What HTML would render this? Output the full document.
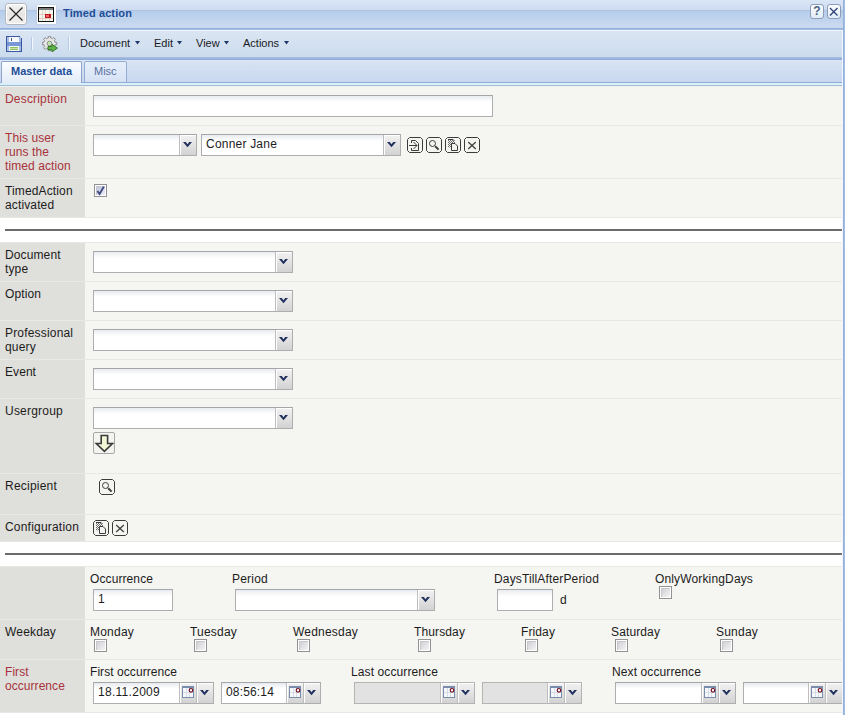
<!DOCTYPE html>
<html><head><meta charset="utf-8">
<style>
*{box-sizing:border-box;margin:0;padding:0}
html,body{width:845px;height:715px;overflow:hidden;background:#fff;font-family:"Liberation Sans",sans-serif;position:relative}
.a{position:absolute}
.t12{font-size:12px;line-height:14px;color:#1c1c1c;white-space:nowrap}
.red{color:#a8323c}
.lb{left:0;width:85px;background:#dfdfdb}
.ct{left:85px;width:758px;background:#f5f5f1}
.sep{left:0;width:843px;height:1px;background:#e8e8e4}
.rule{left:5px;width:838px;height:2px;background:#6c6c6c}
.inp{border:1px solid #acaeb0;border-top-color:#a4a6aa;background:linear-gradient(#e8ebef,#fff 6px,#fff);height:22px}
.btn{position:absolute;top:0;bottom:0;width:17px;border-left:1px solid #bdbdbd;background:linear-gradient(#f2f2f2,#d2d2d2);box-shadow:inset 1px 1px 0 #fff}
.cb{width:13px;height:13px;border:1px solid #929292;background:#fff;padding:1px}
.cb i{display:block;width:9px;height:9px;background:linear-gradient(135deg,#cdcdd2,#f4f4f6);box-shadow:inset 1px 1px 0 #c8c8cc}
.tb{font-size:11px;line-height:13px;color:#1a1a22;white-space:nowrap}
</style><style>
.itx{position:absolute;left:4px;top:2px;font-size:12px;line-height:14px;color:#1c1c1c;white-space:nowrap}
.chev{position:absolute;left:0;top:0}
.btn .cal{position:absolute;left:2px;top:3px}
.ck{background:linear-gradient(135deg,#b8c0dc,#eef0fa)!important}
.cb{position:absolute}
</style></head><body>

<!-- HEADER -->
<div class="a" style="left:0;top:0;width:845px;height:10px;background:linear-gradient(#d9e6f6,#cfdcf0)"></div>
<div class="a" style="left:0;top:10px;width:845px;height:1px;background:#adc4e4"></div>
<div class="a" style="left:0;top:11px;width:845px;height:17px;background:linear-gradient(#b6cdea,#cbdaf0)"></div>
<div class="a" style="left:0;top:28px;width:845px;height:1px;background:#8fb0dc"></div>
<div class="a" style="left:0;top:29px;width:845px;height:1px;background:#a6c0e4"></div>
<div class="a" style="left:0;top:30px;width:845px;height:1px;background:#eef4fb"></div>
<!-- toolbar -->
<div class="a" style="left:0;top:31px;width:845px;height:26px;background:linear-gradient(#dbe5f2,#cbdcee)"></div>
<div class="a" style="left:0;top:57px;width:845px;height:1px;background:#a8bcd8"></div>
<div class="a" style="left:0;top:58px;width:845px;height:1px;background:#98b4e0"></div>
<div class="a" style="left:0;top:59px;width:845px;height:1px;background:#90acd8"></div>
<!-- tabstrip -->
<div class="a" style="left:0;top:60px;width:845px;height:1px;background:#dce6f6"></div>
<div class="a" style="left:0;top:61px;width:845px;height:21px;background:linear-gradient(#d8e2f2,#c8d8f0)"></div>
<div class="a" style="left:0;top:82px;width:845px;height:1px;background:#94acd4"></div>
<div class="a" style="left:0;top:83px;width:845px;height:1px;background:#d8f0fc"></div>
<div class="a" style="left:0;top:84px;width:845px;height:1px;background:#d8f2fc"></div>
<div class="a" style="left:0;top:85px;width:845px;height:1px;background:#a8bad8"></div>

<!-- right border -->
<div class="a" style="left:843px;top:0;width:1px;height:715px;background:#96b0d8"></div>
<div class="a" style="left:844px;top:0;width:1px;height:715px;background:#a2bee8"></div>
<div class="a" style="left:842px;top:31px;width:1px;height:684px;background:#eef8fe"></div>

<!-- header close btn -->
<div class="a" style="left:5px;top:3px;width:22px;height:22px;border:1px solid #b4b8be;border-radius:3px;background:linear-gradient(#f4f4f4,#e8e6e4 50%,#f0f0ee);box-shadow:inset 0 0 0 1px #fff"></div>
<svg class="a" style="left:6px;top:3px" width="21" height="22"><path d="M3.5 4.5L16.5 17.5M16.5 4.5L3.5 17.5" stroke="#262626" stroke-width="1.2"/></svg>
<!-- calendar icon -->
<div class="a" style="left:37px;top:5px;width:19px;height:19px;background:#fff;box-shadow:0 0 1px #aaa"></div>
<svg class="a" style="left:38px;top:7px" width="16" height="15" shape-rendering="crispEdges">
<rect x="0" y="0" width="16" height="15" fill="#111"/>
<rect x="1" y="1" width="14" height="2" fill="#7a7a7a"/>
<rect x="1" y="3" width="14" height="11" fill="#f6f6ee"/>
<rect x="4" y="3" width="1" height="11" fill="#d8dcc8"/>
<rect x="7" y="3" width="1" height="11" fill="#d8dcc8"/>
<rect x="11" y="3" width="1" height="11" fill="#d8dcc8"/>
<rect x="1" y="7" width="14" height="1" fill="#e8c8c0"/>
<rect x="1" y="11" width="14" height="1" fill="#e8c8c0"/>
<rect x="7" y="7" width="6" height="4" fill="#bc1c1c"/>
<rect x="8" y="8" width="3" height="2" fill="#e86a6a"/>
</svg>
<div class="a" style="left:63px;top:7px;letter-spacing:0.11px;font-size:11px;line-height:13px;font-weight:bold;color:#1e4d96;white-space:nowrap">Timed action</div>
<!-- help/close -->
<div class="a" style="left:810px;top:4px;width:14px;height:15px;border:1px solid #8d9cb8;border-radius:3px;background:linear-gradient(#fbfdff,#e0ecf8)"></div>
<div class="a" style="left:810px;top:4px;width:14px;text-align:center;font-size:12px;line-height:14px;font-weight:bold;color:#4a6282">?</div>
<div class="a" style="left:827px;top:4px;width:14px;height:15px;border:1px solid #8d9cb8;border-radius:3px;background:linear-gradient(#fbfdff,#e0ecf8)"></div>
<svg class="a" style="left:827px;top:4px" width="14" height="15"><path d="M3 4L10.5 11.5M10.5 4L3 11.5" stroke="#2a3a72" stroke-width="1.2"/></svg>

<!-- TOOLBAR -->
<svg class="a" style="left:6px;top:36px" width="16" height="16" shape-rendering="crispEdges">
<path d="M0 0H13L16 3V16H0Z" fill="#3a58a0"/>
<rect x="1" y="1" width="14" height="14" fill="#a8bce8"/>
<rect x="3" y="1" width="10" height="5" fill="#f6f8fc"/>
<rect x="5" y="2" width="1" height="3" fill="#4a5a80"/>
<rect x="1" y="6" width="14" height="4" fill="#7a98d8"/>
<rect x="3" y="10" width="10" height="5" fill="#f4f8f4"/>
<rect x="4" y="11" width="8" height="1" fill="#90c060"/>
<rect x="4" y="13" width="8" height="1" fill="#90c060"/>
<rect x="4" y="12" width="8" height="1" fill="#c8e0b0"/>
</svg>
<div class="a" style="left:31px;top:37px;width:1px;height:13px;background:#b6c8e4"></div>
<div class="a" style="left:32px;top:37px;width:1px;height:13px;background:#f4f8fe"></div>
<svg class="a" style="left:42px;top:36px" width="18" height="18">
<path d="M12.68 5.37 L12.97 6.28 L14.69 6.22 L14.69 8.78 L12.97 8.72 L12.67 9.66 L12.23 10.50 L13.49 11.68 L11.68 13.49 L10.50 12.23 L9.63 12.68 L8.72 12.97 L8.78 14.69 L6.22 14.69 L6.28 12.97 L5.34 12.67 L4.50 12.23 L3.32 13.49 L1.51 11.68 L2.77 10.50 L2.32 9.63 L2.03 8.72 L0.31 8.78 L0.31 6.22 L2.03 6.28 L2.33 5.34 L2.77 4.50 L1.51 3.32 L3.32 1.51 L4.50 2.77 L5.37 2.32 L6.28 2.03 L6.22 0.31 L8.78 0.31 L8.72 2.03 L9.66 2.33 L10.50 2.77 L11.68 1.51 L13.49 3.32 L12.23 4.50Z" fill="#e6e6e6" stroke="#8c8c8c" stroke-width="1"/>
<circle cx="7.5" cy="7.5" r="2.3" fill="#c4e8b0" stroke="#8c8c8c" stroke-width="1"/>
<path d="M6 10.5H10V8.4L15.4 12.1L10 15.8V13.7H6Z" fill="#64b44a" stroke="#2f7a22" stroke-width="1" stroke-linejoin="miter"/>
</svg>
<div class="a" style="left:68px;top:37px;width:1px;height:13px;background:#b6c8e4"></div>
<div class="a" style="left:69px;top:37px;width:1px;height:13px;background:#f4f8fe"></div>
<div class="a tb" style="left:80px;top:37px">Document</div>
<svg class="a" style="left:135px;top:41px" width="6" height="4"><path d="M0 0H5L2.5 3.5Z" fill="#1d3a6a"/></svg>
<div class="a tb" style="left:154px;top:37px">Edit</div>
<svg class="a" style="left:177px;top:41px" width="6" height="4"><path d="M0 0H5L2.5 3.5Z" fill="#1d3a6a"/></svg>
<div class="a tb" style="left:196px;top:37px">View</div>
<svg class="a" style="left:224px;top:41px" width="6" height="4"><path d="M0 0H5L2.5 3.5Z" fill="#1d3a6a"/></svg>
<div class="a tb" style="left:243px;top:37px">Actions</div>
<svg class="a" style="left:284px;top:41px" width="6" height="4"><path d="M0 0H5L2.5 3.5Z" fill="#1d3a6a"/></svg>

<!-- TABS -->
<div class="a" style="left:1px;top:61px;width:81px;height:22px;border:1px solid #8ea4c8;border-bottom:none;border-radius:2px 2px 0 0;background:linear-gradient(#fbfdff,#e4ecf8)"></div>
<div class="a" style="left:11px;top:65px;font-size:11px;line-height:13px;font-weight:bold;color:#1e4d96;white-space:nowrap">Master data</div>
<div class="a" style="left:84px;top:61px;width:43px;height:22px;border:1px solid #93acd4;border-radius:2px 2px 0 0;background:linear-gradient(#e6eefa,#d6e2f4)"></div>
<div class="a" style="left:94px;top:65px;font-size:11px;line-height:13px;color:#5872a0;white-space:nowrap">Misc</div>

<!-- CONTENT -->
<div class="a" style="left:0;top:0;width:843px;height:715px;overflow:hidden">
<div class="a" style="left:0;top:86px;width:843px;height:629px;background:#fff"></div>
<div class="a sep" style="top:86px;background:#eef2ec"></div>
<div class="a lb" style="top:87px;height:38px"></div>
<div class="a ct" style="top:87px;height:38px"></div>
<div class="a sep" style="top:125px"></div>
<div class="a t12 red" style="left:5px;top:92px;letter-spacing:0.179px">Description</div>
<div class="a inp" style="left:93px;top:95px;width:400px"></div>
<div class="a lb" style="top:126px;height:52px"></div>
<div class="a ct" style="top:126px;height:52px"></div>
<div class="a sep" style="top:178px"></div>
<div class="a t12 red" style="left:5px;top:131px;letter-spacing:0.088px">This user<br>runs the<br>timed action</div>
<div class="a inp" style="left:93px;top:134px;width:104px"><div class="btn" style="right:0"><svg class="chev" width="17" height="20" viewBox="0 0 17 20"><path d="M3 7H5.8L7.5 9.2L9.2 7H12L7.5 12.2Z" fill="#22325e"/></svg></div></div>
<div class="a inp" style="left:201px;top:134px;width:200px"><span class="itx" style="letter-spacing:0.209px">Conner Jane</span><div class="btn" style="right:0"><svg class="chev" width="17" height="20" viewBox="0 0 17 20"><path d="M3 7H5.8L7.5 9.2L9.2 7H12L7.5 12.2Z" fill="#22325e"/></svg></div></div>
<svg class="a" style="left:407px;top:137px" width="16" height="16"><path d="M2.5 0.5H13.5L15.5 2.5V13.5L13.5 15.5H2.5L0.5 13.5V2.5Z" fill="#f4f4f1" stroke="#3c3c3c" stroke-width="1"/><path d="M4.5 6V3.5H8.5L11.5 6.5V13.5H4.5V11" fill="none" stroke="#3c3c3c"/><path d="M2 8.5H10M6.5 5L10 8.5L6.5 12" fill="none" stroke="#3c3c3c"/></svg>
<svg class="a" style="left:426px;top:137px" width="16" height="16"><path d="M2.5 0.5H13.5L15.5 2.5V13.5L13.5 15.5H2.5L0.5 13.5V2.5Z" fill="#f4f4f1" stroke="#3c3c3c" stroke-width="1"/><circle cx="6.5" cy="6.5" r="3" fill="none" stroke="#3c3c3c"/><path d="M9.2 9.2L12.6 12.6" stroke="#3c3c3c" stroke-width="2"/></svg>
<svg class="a" style="left:445px;top:137px" width="16" height="16"><path d="M2.5 0.5H13.5L15.5 2.5V13.5L13.5 15.5H2.5L0.5 13.5V2.5Z" fill="#f4f4f1" stroke="#3c3c3c" stroke-width="1"/><defs><pattern id="dth" width="2" height="2" patternUnits="userSpaceOnUse"><rect width="2" height="2" fill="#f4f4f4"/><rect width="1" height="1" fill="#6a6a6a"/><rect x="1" y="1" width="1" height="1" fill="#6a6a6a"/></pattern></defs><path d="M3 2.5H8L10 4.5V10.5H3Z" fill="url(#dth)"/><path d="M3 2.5H8L9.5 4" fill="none" stroke="#3c3c3c"/><path d="M6.5 7V6.5H10L12.5 9V13.5H6.5Z" fill="#f4f4f1" stroke="#3c3c3c"/></svg>
<svg class="a" style="left:464px;top:137px" width="16" height="16"><path d="M2.5 0.5H13.5L15.5 2.5V13.5L13.5 15.5H2.5L0.5 13.5V2.5Z" fill="#f4f4f1" stroke="#3c3c3c" stroke-width="1"/><path d="M4.2 5L11.8 12M11.8 5L4.2 12" stroke="#3c3c3c" stroke-width="1.2"/></svg>
<div class="a lb" style="top:179px;height:38px"></div>
<div class="a ct" style="top:179px;height:38px"></div>
<div class="a sep" style="top:217px"></div>
<div class="a t12" style="left:5px;top:184px;letter-spacing:0.134px">TimedAction<br>activated</div>
<div class="a cb" style="left:94px;top:184px"><i class="ck"></i><svg class="a" style="left:0;top:0" width="11" height="11"><path d="M2.4 6L4.6 9L8.8 1.6" fill="none" stroke="#3e4a7e" stroke-width="1.9"/></svg></div>
<div class="a rule" style="top:229px"></div>
<div class="a sep" style="top:242px"></div>
<div class="a lb" style="top:243px;height:38px"></div>
<div class="a ct" style="top:243px;height:38px"></div>
<div class="a sep" style="top:281px"></div>
<div class="a t12" style="left:5px;top:248px;letter-spacing:0.123px">Document<br>type</div>
<div class="a inp" style="left:93px;top:251px;width:200px"><div class="btn" style="right:0"><svg class="chev" width="17" height="20" viewBox="0 0 17 20"><path d="M3 7H5.8L7.5 9.2L9.2 7H12L7.5 12.2Z" fill="#22325e"/></svg></div></div>
<div class="a lb" style="top:282px;height:38px"></div>
<div class="a ct" style="top:282px;height:38px"></div>
<div class="a sep" style="top:320px"></div>
<div class="a t12" style="left:5px;top:287px;letter-spacing:0.109px">Option</div>
<div class="a inp" style="left:93px;top:290px;width:200px"><div class="btn" style="right:0"><svg class="chev" width="17" height="20" viewBox="0 0 17 20"><path d="M3 7H5.8L7.5 9.2L9.2 7H12L7.5 12.2Z" fill="#22325e"/></svg></div></div>
<div class="a lb" style="top:321px;height:38px"></div>
<div class="a ct" style="top:321px;height:38px"></div>
<div class="a sep" style="top:359px"></div>
<div class="a t12" style="left:5px;top:326px;letter-spacing:0.180px">Professional<br>query</div>
<div class="a inp" style="left:93px;top:329px;width:200px"><div class="btn" style="right:0"><svg class="chev" width="17" height="20" viewBox="0 0 17 20"><path d="M3 7H5.8L7.5 9.2L9.2 7H12L7.5 12.2Z" fill="#22325e"/></svg></div></div>
<div class="a lb" style="top:360px;height:38px"></div>
<div class="a ct" style="top:360px;height:38px"></div>
<div class="a sep" style="top:398px"></div>
<div class="a t12" style="left:5px;top:365px;letter-spacing:0.066px">Event</div>
<div class="a inp" style="left:93px;top:368px;width:200px"><div class="btn" style="right:0"><svg class="chev" width="17" height="20" viewBox="0 0 17 20"><path d="M3 7H5.8L7.5 9.2L9.2 7H12L7.5 12.2Z" fill="#22325e"/></svg></div></div>
<div class="a lb" style="top:399px;height:74px"></div>
<div class="a ct" style="top:399px;height:74px"></div>
<div class="a sep" style="top:473px"></div>
<div class="a t12" style="left:5px;top:404px;letter-spacing:0.219px">Usergroup</div>
<div class="a inp" style="left:93px;top:407px;width:200px"><div class="btn" style="right:0"><svg class="chev" width="17" height="20" viewBox="0 0 17 20"><path d="M3 7H5.8L7.5 9.2L9.2 7H12L7.5 12.2Z" fill="#22325e"/></svg></div></div>
<div class="a" style="left:93px;top:432px;width:22px;height:22px;border:1px solid #a8a8a8;border-radius:2px;background:#f3f3ef"></div>
<svg class="a" style="left:93px;top:432px" width="22" height="22"><path d="M8.2 3.5H14.6V11.5H19.5L11.4 19.4L3.3 11.5H8.2Z" fill="#f2f6d4" stroke="#3a3a3a" stroke-width="1.6" stroke-linejoin="miter"/></svg>
<div class="a lb" style="top:474px;height:40px"></div>
<div class="a ct" style="top:474px;height:40px"></div>
<div class="a sep" style="top:514px"></div>
<div class="a t12" style="left:5px;top:479px;letter-spacing:0.219px">Recipient</div>
<svg class="a" style="left:99px;top:479px" width="16" height="16"><path d="M2.5 0.5H13.5L15.5 2.5V13.5L13.5 15.5H2.5L0.5 13.5V2.5Z" fill="#f4f4f1" stroke="#3c3c3c" stroke-width="1"/><circle cx="6.5" cy="6.5" r="3" fill="none" stroke="#3c3c3c"/><path d="M9.2 9.2L12.6 12.6" stroke="#3c3c3c" stroke-width="2"/></svg>
<div class="a lb" style="top:515px;height:26px"></div>
<div class="a ct" style="top:515px;height:26px"></div>
<div class="a sep" style="top:541px"></div>
<div class="a t12" style="left:5px;top:520px;letter-spacing:0.202px">Configuration</div>
<svg class="a" style="left:93px;top:520px" width="16" height="16"><path d="M2.5 0.5H13.5L15.5 2.5V13.5L13.5 15.5H2.5L0.5 13.5V2.5Z" fill="#f4f4f1" stroke="#3c3c3c" stroke-width="1"/><defs><pattern id="dth" width="2" height="2" patternUnits="userSpaceOnUse"><rect width="2" height="2" fill="#f4f4f4"/><rect width="1" height="1" fill="#6a6a6a"/><rect x="1" y="1" width="1" height="1" fill="#6a6a6a"/></pattern></defs><path d="M3 2.5H8L10 4.5V10.5H3Z" fill="url(#dth)"/><path d="M3 2.5H8L9.5 4" fill="none" stroke="#3c3c3c"/><path d="M6.5 7V6.5H10L12.5 9V13.5H6.5Z" fill="#f4f4f1" stroke="#3c3c3c"/></svg>
<svg class="a" style="left:112px;top:520px" width="16" height="16"><path d="M2.5 0.5H13.5L15.5 2.5V13.5L13.5 15.5H2.5L0.5 13.5V2.5Z" fill="#f4f4f1" stroke="#3c3c3c" stroke-width="1"/><path d="M4.2 5L11.8 12M11.8 5L4.2 12" stroke="#3c3c3c" stroke-width="1.2"/></svg>
<div class="a rule" style="top:553px"></div>
<div class="a sep" style="top:566px"></div>
<div class="a lb" style="top:567px;height:52px"></div>
<div class="a ct" style="top:567px;height:52px"></div>
<div class="a sep" style="top:619px"></div>
<div class="a t12" style="left:90px;top:572px;letter-spacing:0.098px">Occurrence</div>
<div class="a inp" style="left:93px;top:589px;width:80px"><span class="itx" style="letter-spacing:0.328px">1</span></div>
<div class="a t12" style="left:232px;top:572px;letter-spacing:0.219px">Period</div>
<div class="a inp" style="left:235px;top:589px;width:200px"><div class="btn" style="right:0"><svg class="chev" width="17" height="20" viewBox="0 0 17 20"><path d="M3 7H5.8L7.5 9.2L9.2 7H12L7.5 12.2Z" fill="#22325e"/></svg></div></div>
<div class="a t12" style="left:494px;top:572px;letter-spacing:0.144px">DaysTillAfterPeriod</div>
<div class="a inp" style="left:497px;top:589px;width:56px"></div>
<div class="a t12" style="left:560px;top:593px;letter-spacing:0.328px">d</div>
<div class="a t12" style="left:655px;top:572px;letter-spacing:0.146px">OnlyWorkingDays</div>
<div class="a cb" style="left:659px;top:586px"><i></i></div>
<div class="a lb" style="top:620px;height:39px"></div>
<div class="a ct" style="top:620px;height:39px"></div>
<div class="a sep" style="top:659px"></div>
<div class="a t12" style="left:5px;top:625px;letter-spacing:0.172px">Weekday</div>
<div class="a t12" style="left:90px;top:625px;letter-spacing:0.219px">Monday</div>
<div class="a cb" style="left:94px;top:639px"><i></i></div>
<div class="a t12" style="left:190px;top:625px;letter-spacing:0.203px">Tuesday</div>
<div class="a cb" style="left:194px;top:639px"><i></i></div>
<div class="a t12" style="left:293px;top:625px;letter-spacing:0.207px">Wednesday</div>
<div class="a cb" style="left:297px;top:639px"><i></i></div>
<div class="a t12" style="left:414px;top:625px;letter-spacing:0.123px">Thursday</div>
<div class="a cb" style="left:418px;top:639px"><i></i></div>
<div class="a t12" style="left:521px;top:625px;letter-spacing:0.109px">Friday</div>
<div class="a cb" style="left:525px;top:639px"><i></i></div>
<div class="a t12" style="left:611px;top:625px;letter-spacing:0.123px">Saturday</div>
<div class="a cb" style="left:615px;top:639px"><i></i></div>
<div class="a t12" style="left:716px;top:625px;letter-spacing:0.219px">Sunday</div>
<div class="a cb" style="left:720px;top:639px"><i></i></div>
<div class="a lb" style="top:660px;height:52px"></div>
<div class="a ct" style="top:660px;height:52px"></div>
<div class="a sep" style="top:712px"></div>
<div class="a t12 red" style="left:5px;top:665px;letter-spacing:0.049px">First<br>occurrence</div>
<div class="a t12" style="left:90px;top:665px;letter-spacing:0.062px">First occurrence</div>
<div class="a inp" style="left:93px;top:682px;width:121px"><span class="itx" style="letter-spacing:0.286px">18.11.2009</span><div class="btn" style="right:17px"><svg class="cal" width="12" height="12" shape-rendering="crispEdges"><rect x="0" y="0" width="12" height="12" fill="#7a8cac"/><rect x="1" y="2" width="10" height="9" fill="#f6f8fb"/><rect x="4" y="2" width="1" height="9" fill="#d6dce6"/><rect x="7" y="2" width="1" height="9" fill="#d6dce6"/><rect x="1" y="6" width="10" height="1" fill="#d6dce6"/></svg><svg class="cal" width="12" height="12"><circle cx="9" cy="4.3" r="1.8" fill="#fff" stroke="#700c1c" stroke-width="1.2"/></svg></div><div class="btn" style="right:0"><svg class="chev" width="17" height="20" viewBox="0 0 17 20"><path d="M3 7H5.8L7.5 9.2L9.2 7H12L7.5 12.2Z" fill="#22325e"/></svg></div></div>
<div class="a inp" style="left:221px;top:682px;width:100px"><span class="itx" style="letter-spacing:0.164px">08:56:14</span><div class="btn" style="right:17px"><svg class="cal" width="12" height="12" shape-rendering="crispEdges"><rect x="0" y="0" width="12" height="12" fill="#7a8cac"/><rect x="1" y="2" width="10" height="9" fill="#f6f8fb"/><rect x="4" y="2" width="1" height="9" fill="#d6dce6"/><rect x="7" y="2" width="1" height="9" fill="#d6dce6"/><rect x="1" y="6" width="10" height="1" fill="#d6dce6"/></svg><svg class="cal" width="12" height="12"><circle cx="9" cy="4.3" r="1.8" fill="#fff" stroke="#700c1c" stroke-width="1.2"/></svg></div><div class="btn" style="right:0"><svg class="chev" width="17" height="20" viewBox="0 0 17 20"><path d="M3 7H5.8L7.5 9.2L9.2 7H12L7.5 12.2Z" fill="#22325e"/></svg></div></div>
<div class="a t12" style="left:351px;top:665px;letter-spacing:0.109px">Last occurrence</div>
<div class="a inp" style="left:354px;top:682px;width:121px;background:#e2e2e2;border-color:#b4b4b4"><div class="btn" style="right:17px"><svg class="cal" width="12" height="12" shape-rendering="crispEdges"><rect x="0" y="0" width="12" height="12" fill="#7a8cac"/><rect x="1" y="2" width="10" height="9" fill="#f6f8fb"/><rect x="4" y="2" width="1" height="9" fill="#d6dce6"/><rect x="7" y="2" width="1" height="9" fill="#d6dce6"/><rect x="1" y="6" width="10" height="1" fill="#d6dce6"/></svg><svg class="cal" width="12" height="12"><circle cx="9" cy="4.3" r="1.8" fill="#fff" stroke="#700c1c" stroke-width="1.2"/></svg></div><div class="btn" style="right:0"><svg class="chev" width="17" height="20" viewBox="0 0 17 20"><path d="M3 7H5.8L7.5 9.2L9.2 7H12L7.5 12.2Z" fill="#22325e"/></svg></div></div>
<div class="a inp" style="left:482px;top:682px;width:100px;background:#e2e2e2;border-color:#b4b4b4"><div class="btn" style="right:17px"><svg class="cal" width="12" height="12" shape-rendering="crispEdges"><rect x="0" y="0" width="12" height="12" fill="#7a8cac"/><rect x="1" y="2" width="10" height="9" fill="#f6f8fb"/><rect x="4" y="2" width="1" height="9" fill="#d6dce6"/><rect x="7" y="2" width="1" height="9" fill="#d6dce6"/><rect x="1" y="6" width="10" height="1" fill="#d6dce6"/></svg><svg class="cal" width="12" height="12"><circle cx="9" cy="4.3" r="1.8" fill="#fff" stroke="#700c1c" stroke-width="1.2"/></svg></div><div class="btn" style="right:0"><svg class="chev" width="17" height="20" viewBox="0 0 17 20"><path d="M3 7H5.8L7.5 9.2L9.2 7H12L7.5 12.2Z" fill="#22325e"/></svg></div></div>
<div class="a t12" style="left:612px;top:665px;letter-spacing:0.109px">Next occurrence</div>
<div class="a inp" style="left:615px;top:682px;width:121px"><div class="btn" style="right:17px"><svg class="cal" width="12" height="12" shape-rendering="crispEdges"><rect x="0" y="0" width="12" height="12" fill="#7a8cac"/><rect x="1" y="2" width="10" height="9" fill="#f6f8fb"/><rect x="4" y="2" width="1" height="9" fill="#d6dce6"/><rect x="7" y="2" width="1" height="9" fill="#d6dce6"/><rect x="1" y="6" width="10" height="1" fill="#d6dce6"/></svg><svg class="cal" width="12" height="12"><circle cx="9" cy="4.3" r="1.8" fill="#fff" stroke="#700c1c" stroke-width="1.2"/></svg></div><div class="btn" style="right:0"><svg class="chev" width="17" height="20" viewBox="0 0 17 20"><path d="M3 7H5.8L7.5 9.2L9.2 7H12L7.5 12.2Z" fill="#22325e"/></svg></div></div>
<div class="a inp" style="left:743px;top:682px;width:100px"><div class="btn" style="right:17px"><svg class="cal" width="12" height="12" shape-rendering="crispEdges"><rect x="0" y="0" width="12" height="12" fill="#7a8cac"/><rect x="1" y="2" width="10" height="9" fill="#f6f8fb"/><rect x="4" y="2" width="1" height="9" fill="#d6dce6"/><rect x="7" y="2" width="1" height="9" fill="#d6dce6"/><rect x="1" y="6" width="10" height="1" fill="#d6dce6"/></svg><svg class="cal" width="12" height="12"><circle cx="9" cy="4.3" r="1.8" fill="#fff" stroke="#700c1c" stroke-width="1.2"/></svg></div><div class="btn" style="right:0"><svg class="chev" width="17" height="20" viewBox="0 0 17 20"><path d="M3 7H5.8L7.5 9.2L9.2 7H12L7.5 12.2Z" fill="#22325e"/></svg></div></div>
<div class="a" style="left:842px;top:86px;width:1px;height:629px;background:#eef8fe"></div>
</div>
</body></html>
